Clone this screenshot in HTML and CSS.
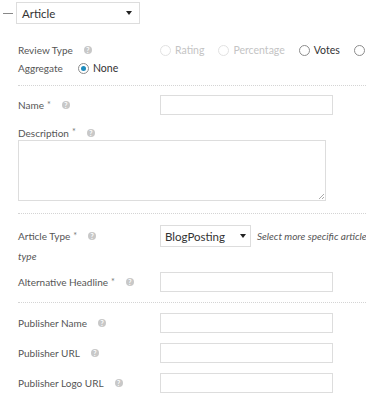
FILE: index.html
```html
<!DOCTYPE html>
<html lang="en">
<head>
  <meta charset="UTF-8">
  <title>Schema - Article</title>
  <link rel="stylesheet" href="styles.css">
</head>
<body>

  <!-- 1) SCHEMA TYPE PICKER -->
  <div class="type-bar">
    <span class="collapse"></span>
    <div class="select select-type">
      <span>Article</span>
      <span class="caret"></span>
    </div>
  </div>

  <div class="fields">

    <!-- 2) REVIEW TYPE -->
    <div class="review-line">
      <div class="label">Review Type <span class="help">?</span></div>
      <label class="radio disabled"><span class="dot"></span>Rating</label>
      <label class="radio disabled"><span class="dot"></span>Percentage</label>
      <label class="radio"><span class="dot"></span>Votes</label>
      <label class="radio"><span class="dot"></span></label>
    </div>
    <div class="review-line second">
      <span class="wrap-text">Aggregate</span>
      <label class="radio"><span class="dot checked"></span>None</label>
    </div>

    <!-- 3) NAME & DESCRIPTION -->
    <div class="group">
      <div class="row">
        <div class="label">Name <span class="req">*</span> <span class="help">?</span></div>
        <div class="input"></div>
      </div>
      <div class="label block">Description <span class="req">*</span> <span class="help">?</span></div>
      <div class="textarea"><span class="grip"></span></div>
    </div>

    <!-- 4) ARTICLE TYPE -->
    <div class="group">
      <div class="row row-article">
        <div class="label">Article Type <span class="req">*</span> <span class="help">?</span></div>
        <div class="select select-small">
          <span>BlogPosting</span>
          <span class="caret"></span>
        </div>
        <em class="note">Select more specific article</em>
      </div>
      <em class="note note-wrap">type</em>
      <div class="row row-alt">
        <div class="label">Alternative Headline <span class="req">*</span> <span class="help">?</span></div>
        <div class="input"></div>
      </div>
    </div>

    <!-- 5) PUBLISHER -->
    <div class="group publisher">
      <div class="row">
        <div class="label">Publisher Name <span class="help">?</span></div>
        <div class="input"></div>
      </div>
      <div class="row">
        <div class="label">Publisher URL <span class="help">?</span></div>
        <div class="input"></div>
      </div>
      <div class="row">
        <div class="label">Publisher Logo URL <span class="help">?</span></div>
        <div class="input"></div>
      </div>
    </div>

  </div>

</body>
</html>
```

FILE: styles.css
```css
/* page */
html, body {
  margin: 0;
  padding: 0;
  background: #fff;
  overflow: hidden;
}

body {
  width: 366px;
  height: 400px;
  font-family: Lato, sans-serif;
  font-size: 10px;
  color: #555;
}

/* top type picker */
.type-bar {
  display: flex;
  align-items: center;
  padding: 2px 0 0 3px;
  height: 22px;
}

.collapse {
  width: 10px;
  height: 1px;
  background: #888;
  margin-right: 3px;
}

.select {
  display: flex;
  align-items: center;
  justify-content: space-between;
  box-sizing: border-box;
  border: 1px solid #ddd;
  background: #fff;
  color: #333;
  font-size: 11.5px;
}

.select-type {
  width: 124px;
  height: 22px;
  padding: 0 7px 0 5px;
}

.select-small {
  width: 91px;
  height: 22px;
  padding: 0 4px 0 4px;
  flex: none;
}

.caret {
  width: 0;
  height: 0;
  border-left: 3px solid transparent;
  border-right: 3px solid transparent;
  border-top: 4px solid #222;
}

/* field list */
.fields {
  padding-left: 18px;
}

.label {
  width: 142px;
  flex: none;
  display: flex;
  align-items: center;
  white-space: nowrap;
}

.req {
  font-size: 9px;
  margin-left: 3px;
  color: #777;
  align-self: flex-start;
  line-height: 11px;
}

.help {
  display: inline-flex;
  align-items: center;
  justify-content: center;
  width: 8px;
  height: 8px;
  border-radius: 50%;
  background: #c8c8c8;
  color: #fff;
  font-size: 7px;
  font-weight: bold;
  margin-left: 11px;
  line-height: 1;
}

/* review radios */
.review-line {
  display: flex;
  align-items: center;
  height: 18px;
  margin-top: 17px;
}

.review-line.second {
  margin-top: 0;
  padding-bottom: 8px;
  border-bottom: 1px dotted #d4d4d4;
}

.wrap-text {
  width: 60px;
}

.radio {
  display: flex;
  align-items: center;
  margin-right: 14px;
  color: #333;
  font-size: 10.5px;
}

.radio.disabled {
  color: #c4c4c4;
}

.dot {
  box-sizing: border-box;
  width: 11px;
  height: 11px;
  border-radius: 50%;
  border: 1px solid #8c8c8c;
  margin-right: 4px;
  position: relative;
}

.disabled .dot {
  border-color: #e2e2e2;
}

.dot.checked::after {
  content: "";
  position: absolute;
  left: 2px;
  top: 2px;
  width: 5px;
  height: 5px;
  border-radius: 50%;
  background: #1e8cbe;
}

/* groups separated by dotted rules */
.group {
  padding: 9px 0 12px;
  border-bottom: 1px dotted #d4d4d4;
}

.row {
  display: flex;
  align-items: center;
}

.input {
  box-sizing: border-box;
  width: 173px;
  height: 20px;
  border: 1px solid #ddd;
  background: #fff;
}

.label.block {
  margin-top: 11px;
  height: 14px;
}

.textarea {
  position: relative;
  box-sizing: border-box;
  width: 308px;
  height: 61px;
  border: 1px solid #ddd;
}

.grip {
  position: absolute;
  right: 1px;
  bottom: 1px;
  width: 5px;
  height: 5px;
  background: linear-gradient(135deg, transparent 45%, #aaa 45%, #aaa 55%, transparent 55%, transparent 75%, #aaa 75%, #aaa 85%, transparent 85%);
}

.group + .group {
  padding-top: 11px;
  padding-bottom: 10px;
}

.row-article {
  white-space: nowrap;
}

.note {
  margin-left: 6px;
  color: #555;
  font-size: 10px;
}

.note-wrap {
  display: block;
  margin: 0;
  height: 18px;
  line-height: 18px;
}

.row-alt {
  margin-top: 7px;
}

.group.publisher {
  padding-top: 10px;
  border-bottom: none;
}

.publisher .row + .row {
  margin-top: 10px;
}
```
